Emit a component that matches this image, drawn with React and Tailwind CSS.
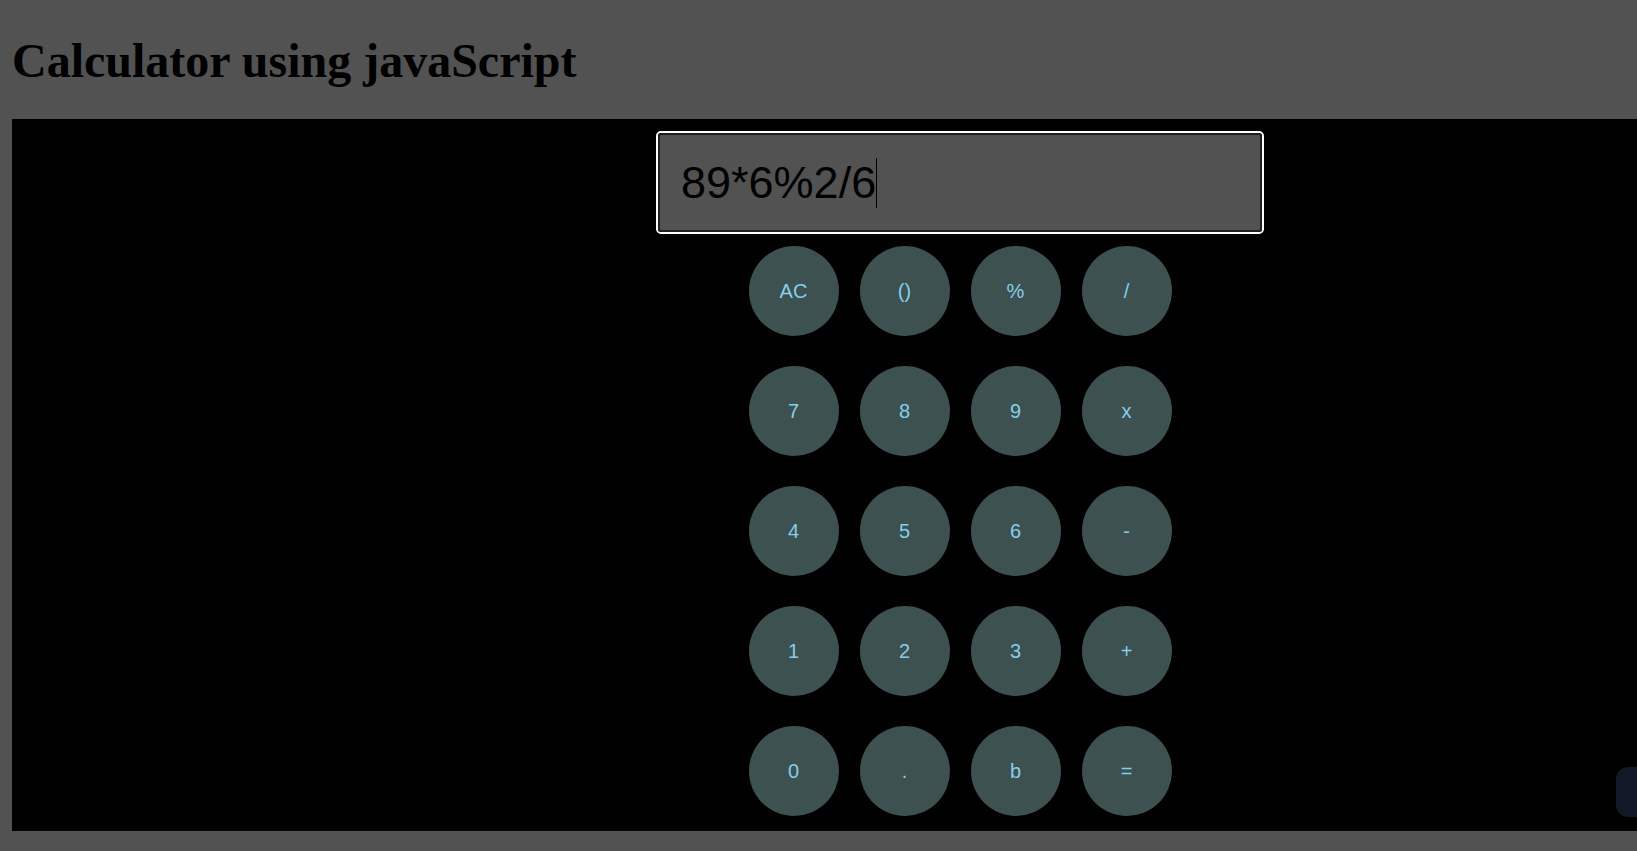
const keys = ['AC', '()', '%', '/', '7', '8', '9', 'x', '4', '5', '6', '-', '1', '2', '3', '+', '0', '.', 'b', '=']

const App = () => {
  return (
    <div className="relative min-h-screen bg-[#525252] overflow-hidden">
      {/* Title */}
      <h1 className="px-3 pt-[34px] pb-[32px] text-[48px] leading-[53px] font-bold text-black font-['Liberation_Serif',serif]">
        Calculator using javaScript
      </h1>

      {/* Calculator body */}
      <div className="ml-3 w-[1896px] bg-black pt-3 pb-[15px] flex flex-col items-center">
        <div className="w-[608px] h-[103px] border-2 border-white rounded-[5px]">
          <div className="h-full border-2 border-[#1f1f1f] rounded-[3px] bg-[#525252] flex items-center pl-[21px]">
            <span className="text-[45px] leading-[50px] text-black font-['Liberation_Sans',Arial,sans-serif]">89*6%2/6</span>
            <span className="w-px h-[50px] bg-black" />
          </div>
        </div>

        <div className="mt-3 grid grid-cols-4 gap-x-[21px] gap-y-[30px]">
          {keys.map(k => (
            <button
              key={k}
              className="w-[90px] h-[90px] rounded-full bg-[#3c5150] text-[#87ceeb] text-[20px] flex items-center justify-center font-['Liberation_Sans',Arial,sans-serif]"
            >
              {k}
            </button>
          ))}
        </div>
      </div>

      {/* floating widget at the edge */}
      <div className="absolute left-[1616px] top-[767px] w-[40px] h-[50px] rounded-[12px] bg-[#111827]" />
    </div>
  )
}

export default App
